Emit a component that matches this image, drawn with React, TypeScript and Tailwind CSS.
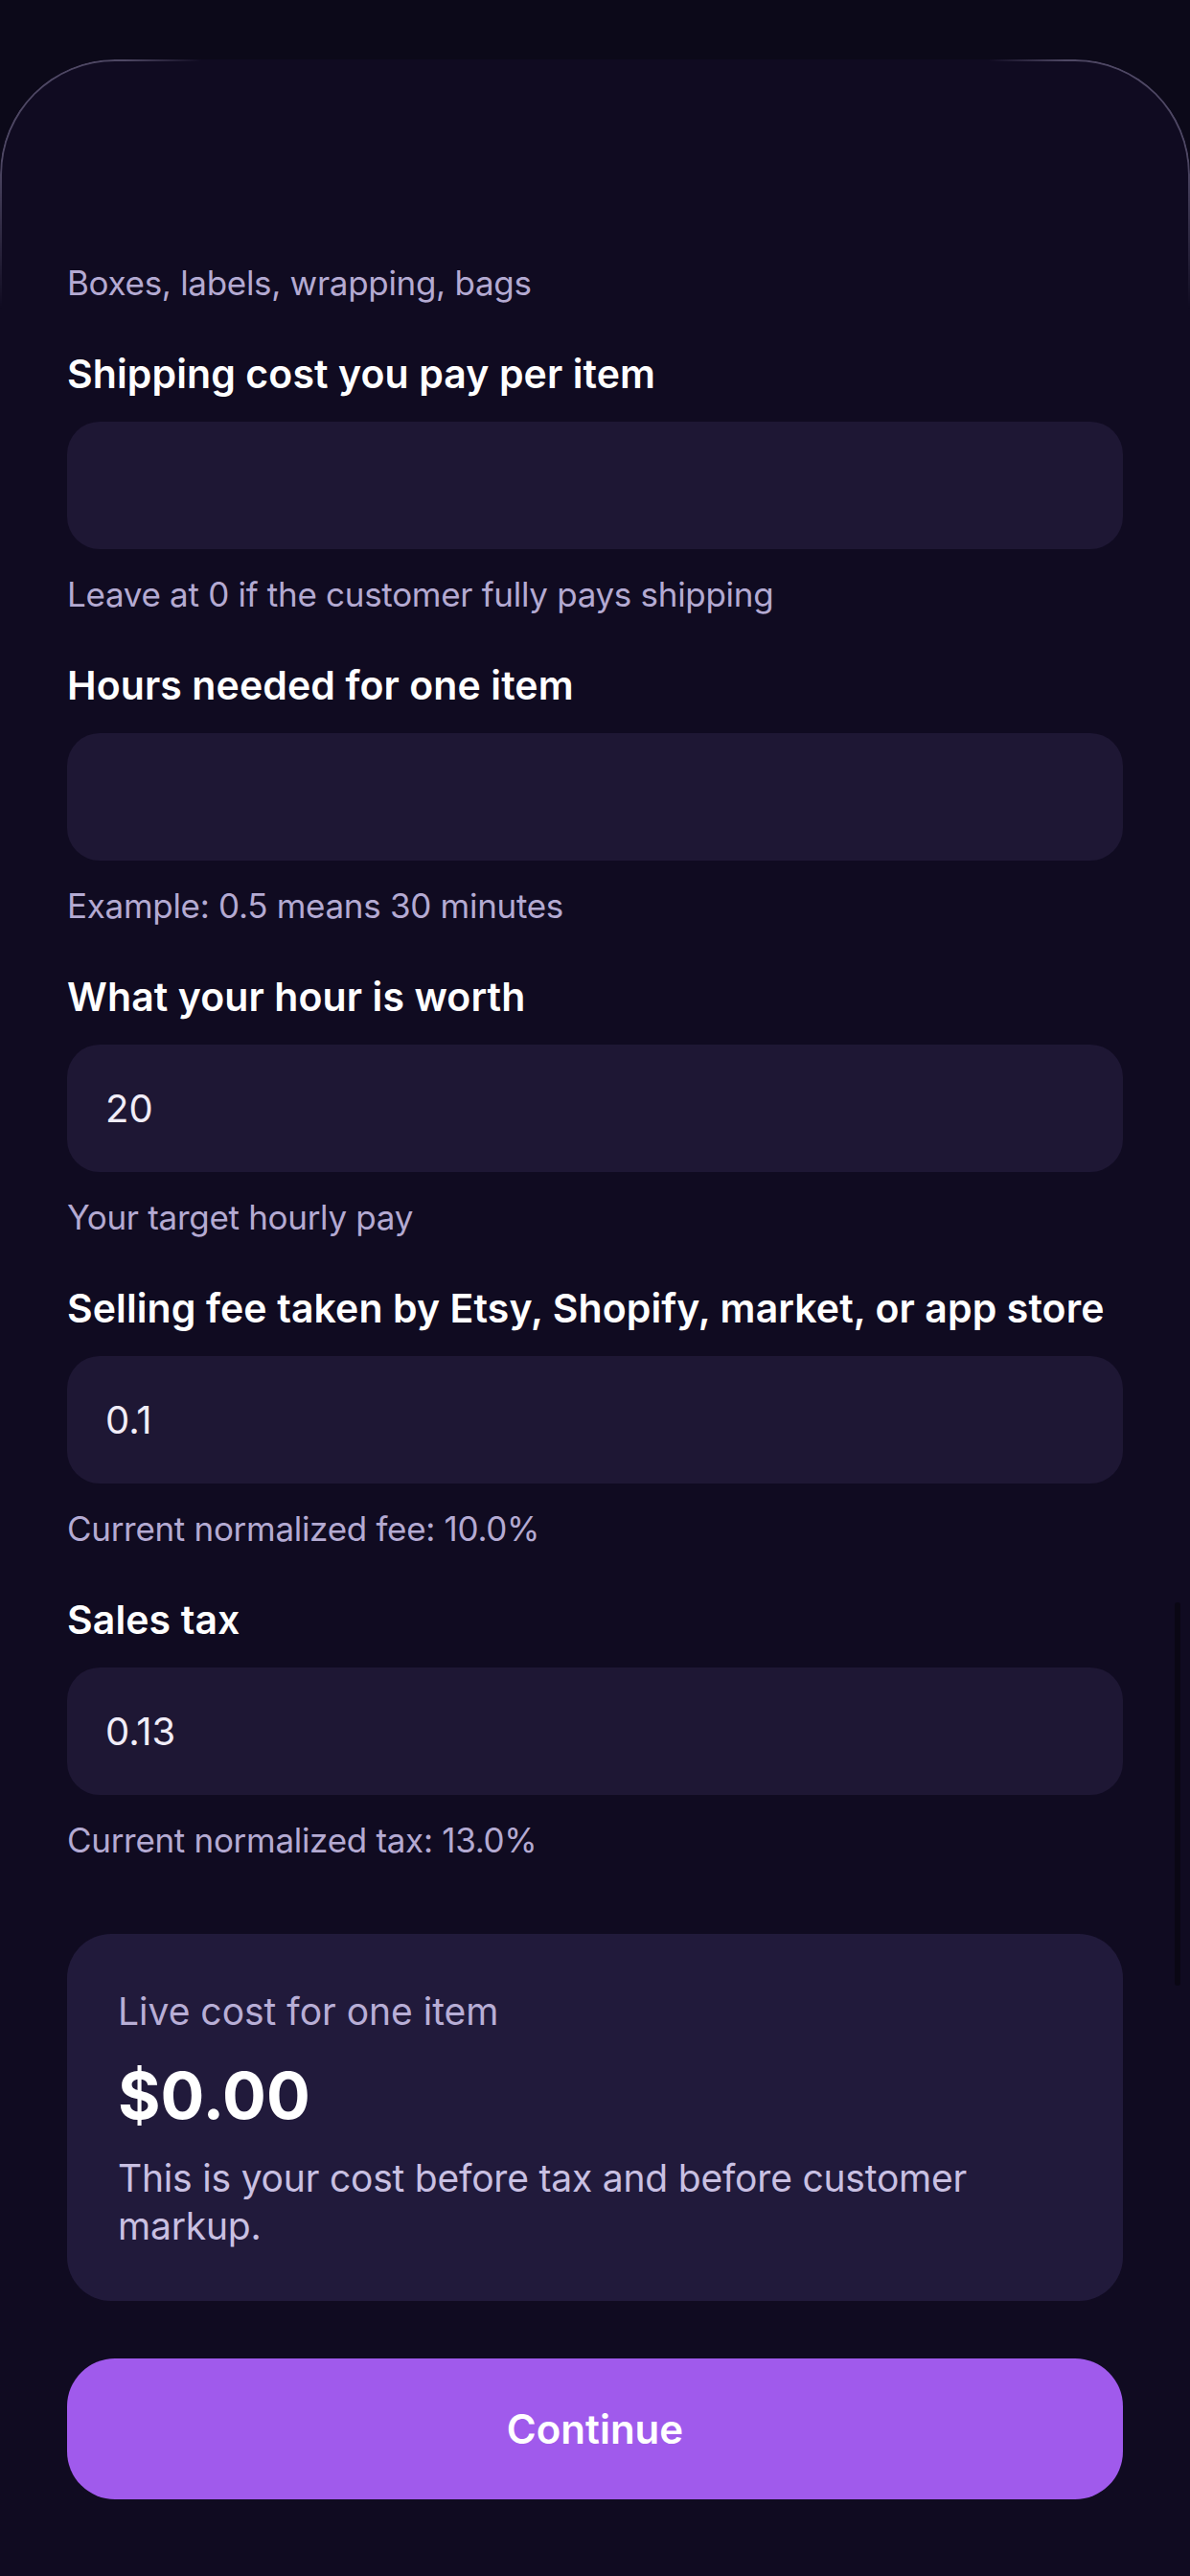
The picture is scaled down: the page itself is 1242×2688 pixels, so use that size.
import type { ReactNode } from "react";

type Field = {
  label: string;
  value: string;
  hint: string;
};

const fields: Field[] = [
  { label: "Shipping cost you pay per item", value: "", hint: "Leave at 0 if the customer fully pays shipping" },
  { label: "Hours needed for one item", value: "", hint: "Example: 0.5 means 30 minutes" },
  { label: "What your hour is worth", value: "20", hint: "Your target hourly pay" },
  { label: "Selling fee taken by Etsy, Shopify, market, or app store", value: "0.1", hint: "Current normalized fee: 10.0%" },
  { label: "Sales tax", value: "0.13", hint: "Current normalized tax: 13.0%" },
];

const Hint = ({ children }: { children: ReactNode }) => (
  <p className="text-[35px] leading-[44px] text-[#b4aad2] tracking-[-0.3px]">{children}</p>
);

const FormField = ({ field }: { field: Field }) => (
  <div className="flex flex-col">
    <label className="text-[41px] leading-[50px] font-semibold text-white mt-[48px] tracking-[0.1px]">
      {field.label}
    </label>
    <div className="mt-[25px] h-[133px] rounded-[34px] bg-[#1e1734] flex items-center px-[40px]">
      <input
        readOnly
        value={field.value}
        className="w-full bg-transparent outline-none text-[40px] text-[#f1edf8]"
      />
    </div>
    <div className="mt-[25px]">
      <Hint>{field.hint}</Hint>
    </div>
  </div>
);

export default function App() {
  return (
    <div
      className="w-[1242px] h-[2688px] bg-[#0c0919] pt-[62px] overflow-hidden"
      style={{ fontFamily: "Inter, 'Noto Sans', sans-serif" }}
    >
      <div className="relative h-full bg-[#100b21] rounded-t-[120px]">
        {/* sheet edge highlight near the top corners */}
        <div className="absolute inset-x-0 top-0 h-[260px] rounded-t-[120px] border-t-2 border-x-2 border-[#8b84a6]/50 pointer-events-none [mask-image:linear-gradient(to_bottom,black_40%,transparent)]" />
        <div className="absolute left-[130px] right-[130px] top-0 h-[4px] bg-[linear-gradient(to_right,transparent,#100b21_80px,#100b21_calc(100%-80px),transparent)]" />
        {/* scroll indicator */}
        <div className="absolute right-[10px] top-[1610px] w-[6px] h-[400px] rounded-full bg-[#0a0714]" />

        <div className="px-[70px] pt-[211px] flex flex-col">
          <Hint>Boxes, labels, wrapping, bags</Hint>
          {fields.map((f) => (
            <FormField key={f.label} field={f} />
          ))}

          <div className="mt-[76px] rounded-[46px] bg-[#211a3b] px-[53px] pt-[57px] pb-[53px] flex flex-col">
            <p className="text-[39px] leading-[48px] text-[#b8aed6]">Live cost for one item</p>
            <p className="mt-[23px] text-[68px] leading-[80px] font-bold text-white">$0.00</p>
            <p className="mt-[22px] text-[39px] leading-[50px] text-[#c9c0e2] tracking-[-0.2px]">
              This is your cost before tax and before customer markup.
            </p>
          </div>

          <button className="mt-[60px] h-[147px] rounded-[50px] bg-[#a05aec] text-white text-[42px] font-semibold">
            Continue
          </button>
        </div>
      </div>
    </div>
  );
}
